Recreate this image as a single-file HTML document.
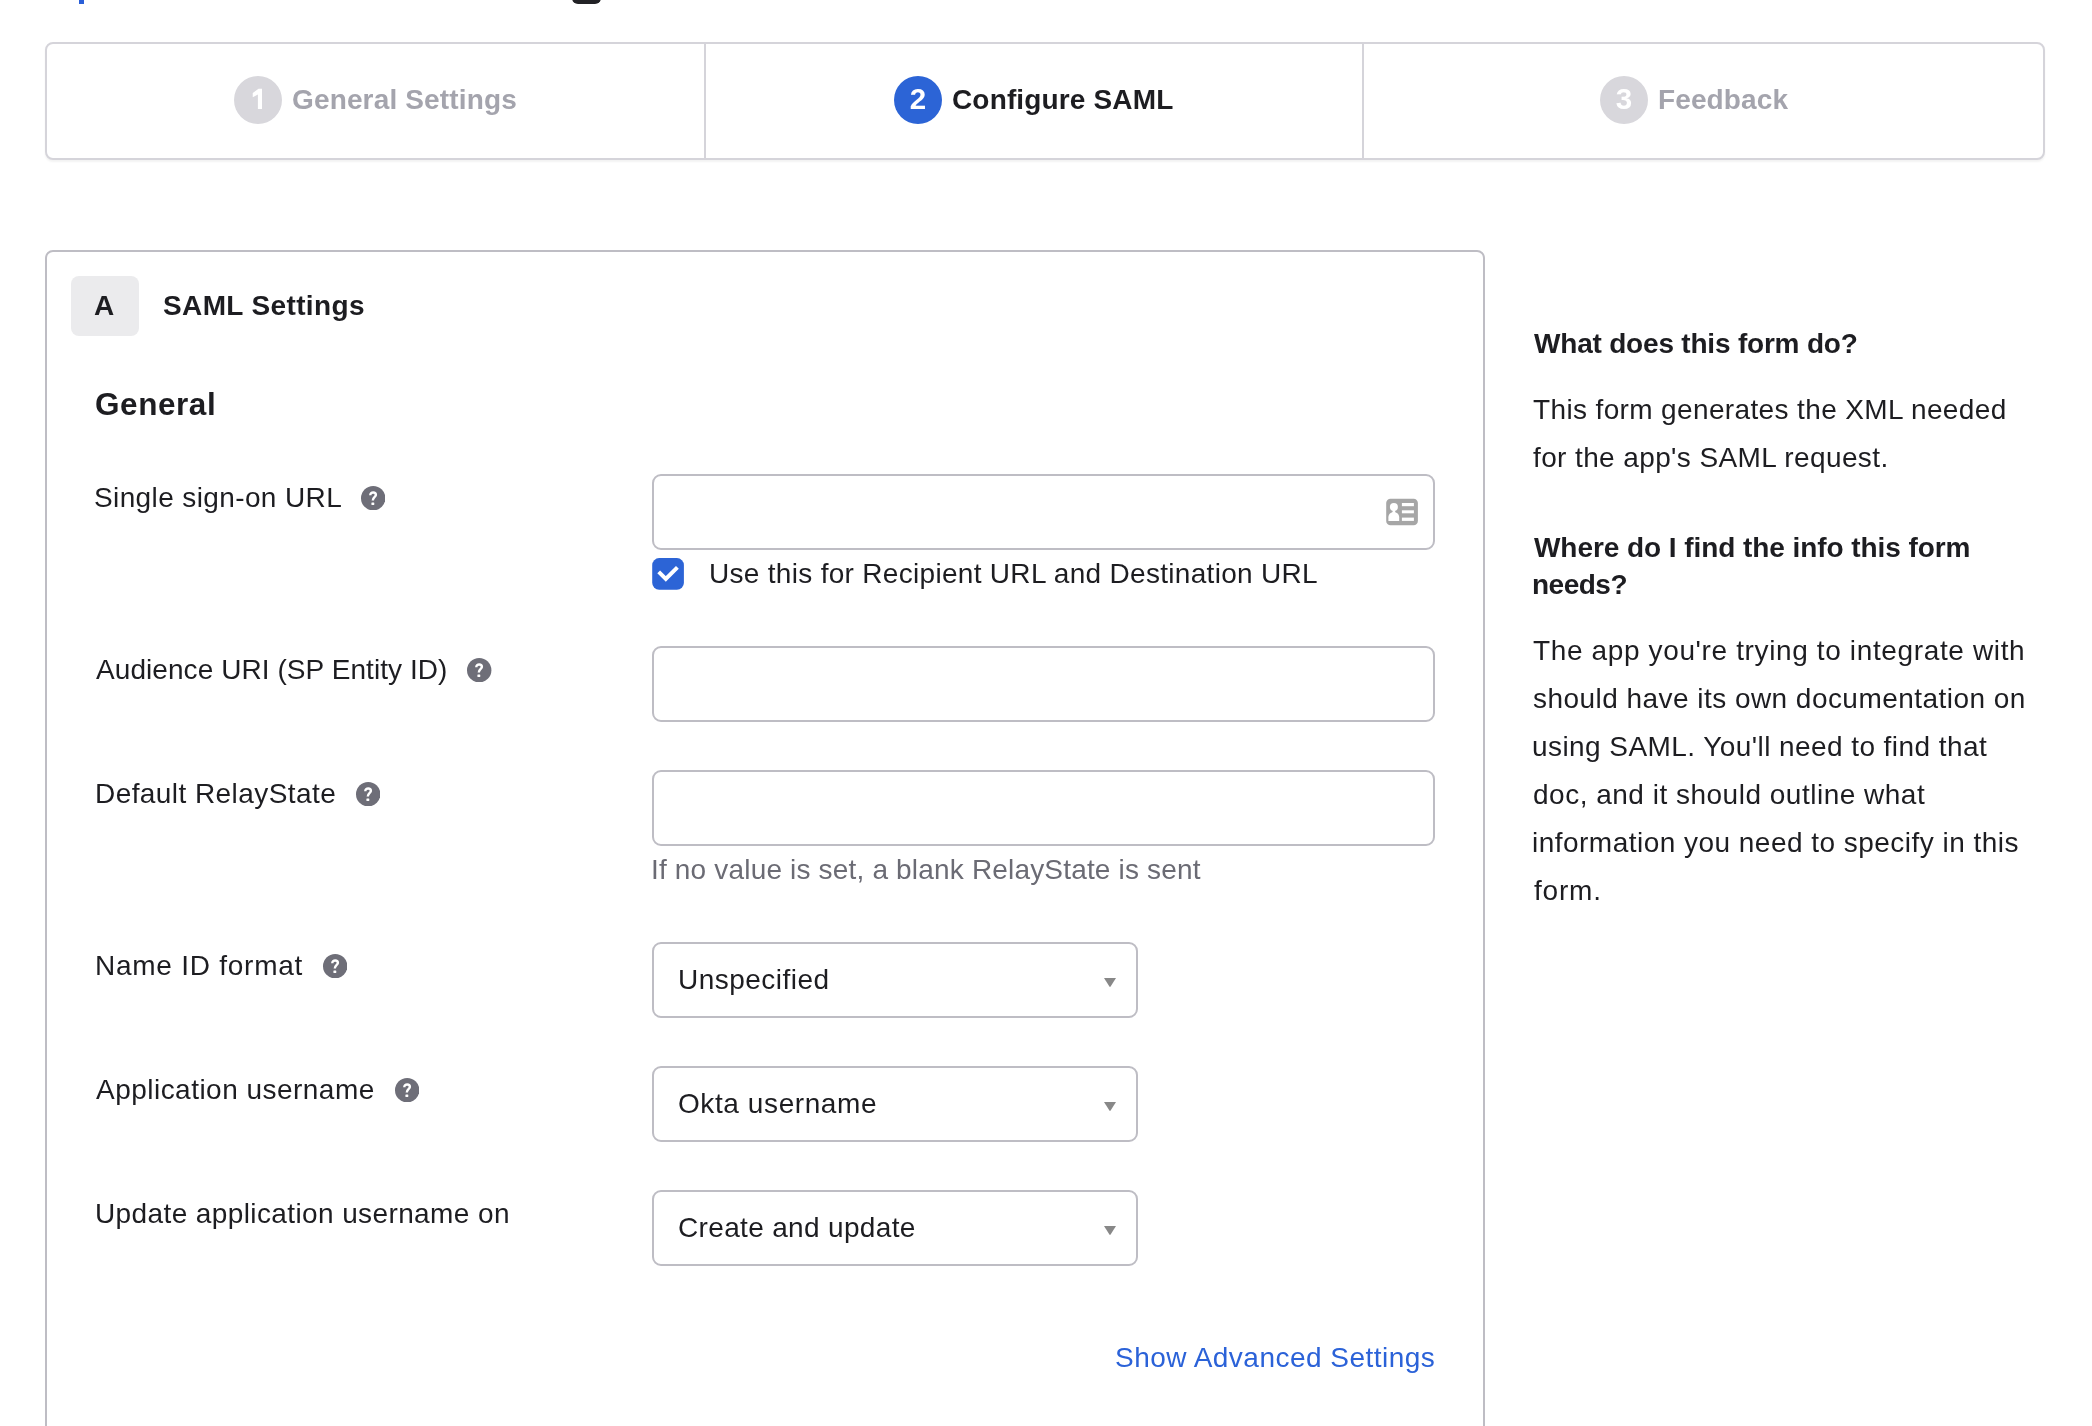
<!DOCTYPE html>
<html>
<head>
<meta charset="utf-8">
<style>
html,body{margin:0;padding:0;}
body{width:2092px;height:1426px;overflow:hidden;background:#ffffff;position:relative;font-family:"Liberation Sans",sans-serif;color:#1d1d21;}
.a{position:absolute;}
.t{position:absolute;white-space:nowrap;line-height:40px;will-change:transform;}
.circ{position:absolute;width:48px;height:48px;border-radius:50%;color:#fff;font-weight:700;font-size:29.5px;line-height:45px;text-align:center;will-change:transform;}
</style>
</head>
<body>
<div class="a" style="left:78.5px;top:0;width:5.5px;height:4px;background:#2a5fd8;"></div>
<div class="a" style="left:572px;top:-20px;width:29px;height:23.8px;border-radius:6px;background:#222226;"></div>
<div class="a" style="left:45px;top:42px;width:1996px;height:114px;border:2px solid #d5d4da;border-radius:8px;background:#fff;box-shadow:0 2px 2px rgba(0,0,0,0.05);"></div>
<div class="a" style="left:704px;top:44px;width:2px;height:114px;background:#d5d4da;"></div>
<div class="a" style="left:1362px;top:44px;width:2px;height:114px;background:#d5d4da;"></div>
<div class="circ" style="left:234px;top:76px;background:#d8d7dc;"></div>
<div class="circ" style="left:894px;top:76px;background:#2c64d6;">2</div>
<div class="circ" style="left:1600px;top:76px;background:#d8d7dc;">3</div>
<svg class="a" style="left:234px;top:76px" width="48" height="48" viewBox="0 0 48 48"><path d="M18.75 17.1L24.5 12.8H28V32.9H23.9V18.6L18.75 21.2Z" fill="#fff"/></svg>
<div class="a" style="left:45px;top:250px;width:1436px;height:1300px;border:2px solid #bebdc4;border-radius:8px;background:#fff;"></div>
<div class="a" style="left:71px;top:276px;width:68px;height:60px;border-radius:8px;background:#ebebed;"></div>
<div class="a" style="left:652px;top:474px;width:779px;height:72px;border:2px solid #bebdc4;border-radius:9px;background:#fff;"></div>
<div class="a" style="left:652px;top:646px;width:779px;height:72px;border:2px solid #bebdc4;border-radius:9px;background:#fff;"></div>
<div class="a" style="left:652px;top:770px;width:779px;height:72px;border:2px solid #bebdc4;border-radius:9px;background:#fff;"></div>
<div class="a" style="left:652px;top:942px;width:482px;height:72px;border:2px solid #bebdc4;border-radius:9px;background:#fff;"></div>
<svg class="a" style="left:1104px;top:978px" width="12" height="10" viewBox="0 0 12 10"><path d="M0 0H12L6.6 8.6Q6 9.2 5.4 8.6Z" fill="#888888"/></svg>
<div class="a" style="left:652px;top:1066px;width:482px;height:72px;border:2px solid #bebdc4;border-radius:9px;background:#fff;"></div>
<svg class="a" style="left:1104px;top:1102px" width="12" height="10" viewBox="0 0 12 10"><path d="M0 0H12L6.6 8.6Q6 9.2 5.4 8.6Z" fill="#888888"/></svg>
<div class="a" style="left:652px;top:1190px;width:482px;height:72px;border:2px solid #bebdc4;border-radius:9px;background:#fff;"></div>
<svg class="a" style="left:1104px;top:1226px" width="12" height="10" viewBox="0 0 12 10"><path d="M0 0H12L6.6 8.6Q6 9.2 5.4 8.6Z" fill="#888888"/></svg>
<svg class="a" style="left:1382px;top:494px" width="40" height="36" viewBox="0 0 40 36"><rect x="4.2" y="4.7" width="31.7" height="26.5" rx="4.3" fill="#a6a6a6"/><circle cx="11.9" cy="12.9" r="4.0" fill="#fff"/><rect x="10.6" y="15.5" width="2.6" height="3.2" fill="#fff"/><path d="M6.4 26.9V23.3C6.4 20.2 8.8 17.9 11.8 17.9C14.8 17.9 17.2 20.2 17.2 23.3V26.9Z" fill="#fff"/><rect x="19.9" y="9.0" width="12.0" height="3.2" fill="#fff"/><rect x="19.9" y="16.3" width="12.0" height="3.0" fill="#fff"/><rect x="19.9" y="23.6" width="12.0" height="3.3" fill="#fff"/></svg>
<svg class="a" style="left:652px;top:558px" width="32" height="32" viewBox="0 0 32 32"><rect x="0.2" y="0.1" width="31.7" height="31.7" rx="7" fill="#2c64d6"/><path d="M6.7 13.9L13.8 20.9L25.4 9.3" fill="none" stroke="#fff" stroke-width="4"/></svg>
<svg class="a" style="left:360.7px;top:485.7px" width="24.4" height="24.4" viewBox="0 0 24.4 24.4"><circle cx="12.2" cy="12.2" r="12.2" fill="#6e6e78"/><path d="M9.3 9.3C9.3 7.4 10.6 6.5 12.2 6.5C13.8 6.5 14.9 7.5 14.9 8.9C14.9 10.7 11.8 11.1 11.8 14.4" fill="none" stroke="#fff" stroke-width="2.4"/><rect x="10.4" y="16.5" width="2.9" height="2.5" rx="0.4" fill="#fff"/></svg>
<svg class="a" style="left:467.4px;top:657.8px" width="24.4" height="24.4" viewBox="0 0 24.4 24.4"><circle cx="12.2" cy="12.2" r="12.2" fill="#6e6e78"/><path d="M9.3 9.3C9.3 7.4 10.6 6.5 12.2 6.5C13.8 6.5 14.9 7.5 14.9 8.9C14.9 10.7 11.8 11.1 11.8 14.4" fill="none" stroke="#fff" stroke-width="2.4"/><rect x="10.4" y="16.5" width="2.9" height="2.5" rx="0.4" fill="#fff"/></svg>
<svg class="a" style="left:356.1px;top:781.7px" width="24.4" height="24.4" viewBox="0 0 24.4 24.4"><circle cx="12.2" cy="12.2" r="12.2" fill="#6e6e78"/><path d="M9.3 9.3C9.3 7.4 10.6 6.5 12.2 6.5C13.8 6.5 14.9 7.5 14.9 8.9C14.9 10.7 11.8 11.1 11.8 14.4" fill="none" stroke="#fff" stroke-width="2.4"/><rect x="10.4" y="16.5" width="2.9" height="2.5" rx="0.4" fill="#fff"/></svg>
<svg class="a" style="left:322.8px;top:953.8px" width="24.4" height="24.4" viewBox="0 0 24.4 24.4"><circle cx="12.2" cy="12.2" r="12.2" fill="#6e6e78"/><path d="M9.3 9.3C9.3 7.4 10.6 6.5 12.2 6.5C13.8 6.5 14.9 7.5 14.9 8.9C14.9 10.7 11.8 11.1 11.8 14.4" fill="none" stroke="#fff" stroke-width="2.4"/><rect x="10.4" y="16.5" width="2.9" height="2.5" rx="0.4" fill="#fff"/></svg>
<svg class="a" style="left:394.9px;top:1077.8px" width="24.4" height="24.4" viewBox="0 0 24.4 24.4"><circle cx="12.2" cy="12.2" r="12.2" fill="#6e6e78"/><path d="M9.3 9.3C9.3 7.4 10.6 6.5 12.2 6.5C13.8 6.5 14.9 7.5 14.9 8.9C14.9 10.7 11.8 11.1 11.8 14.4" fill="none" stroke="#fff" stroke-width="2.4"/><rect x="10.4" y="16.5" width="2.9" height="2.5" rx="0.4" fill="#fff"/></svg>
<div class="t" style="left:292.4px;top:79.8px;font-size:28px;font-weight:700;color:#a4a4ad;letter-spacing:0.147px">General Settings</div>
<div class="t" style="left:952.4px;top:79.8px;font-size:28px;font-weight:700;color:#1d1d21;letter-spacing:0.154px">Configure SAML</div>
<div class="t" style="left:1658.0px;top:79.7px;font-size:28px;font-weight:700;color:#a4a4ad;letter-spacing:0.114px">Feedback</div>
<div class="t" style="left:94.2px;top:286.4px;font-size:28px;font-weight:700;color:#1d1d21;letter-spacing:0.0px">A</div>
<div class="t" style="left:163.0px;top:286.4px;font-size:28px;font-weight:700;color:#1d1d21;letter-spacing:0.375px">SAML Settings</div>
<div class="t" style="left:95.0px;top:383.5px;font-size:31.5px;font-weight:700;color:#1d1d21;letter-spacing:0.567px">General</div>
<div class="t" style="left:93.9px;top:477.9px;font-size:28px;font-weight:400;color:#1d1d21;letter-spacing:0.382px">Single sign-on URL</div>
<div class="t" style="left:708.5px;top:553.6px;font-size:28px;font-weight:400;color:#1d1d21;letter-spacing:0.302px">Use this for Recipient URL and Destination URL</div>
<div class="t" style="left:95.6px;top:650.1px;font-size:28px;font-weight:400;color:#1d1d21;letter-spacing:0.069px">Audience URI (SP Entity ID)</div>
<div class="t" style="left:94.7px;top:774.0px;font-size:28px;font-weight:400;color:#1d1d21;letter-spacing:0.429px">Default RelayState</div>
<div class="t" style="left:651.2px;top:849.8px;font-size:28px;font-weight:400;color:#6b6b74;letter-spacing:0.176px">If no value is set, a blank RelayState is sent</div>
<div class="t" style="left:94.7px;top:945.6px;font-size:28px;font-weight:400;color:#1d1d21;letter-spacing:0.746px">Name ID format</div>
<div class="t" style="left:677.6px;top:960.1px;font-size:28px;font-weight:400;color:#1d1d21;letter-spacing:0.48px">Unspecified</div>
<div class="t" style="left:95.9px;top:1069.9px;font-size:28px;font-weight:400;color:#1d1d21;letter-spacing:0.474px">Application username</div>
<div class="t" style="left:678.2px;top:1084.2px;font-size:28px;font-weight:400;color:#1d1d21;letter-spacing:0.592px">Okta username</div>
<div class="t" style="left:94.6px;top:1194.0px;font-size:28px;font-weight:400;color:#1d1d21;letter-spacing:0.39px">Update application username on</div>
<div class="t" style="left:678.4px;top:1208.0px;font-size:28px;font-weight:400;color:#1d1d21;letter-spacing:0.337px">Create and update</div>
<div class="t" style="left:1115.4px;top:1337.8px;font-size:28px;font-weight:400;color:#2b62d8;letter-spacing:0.476px">Show Advanced Settings</div>
<div class="t" style="left:1533.5px;top:324.1px;font-size:28px;font-weight:700;color:#1d1d21;letter-spacing:-0.2px">What does this form do?</div>
<div class="t" style="left:1532.5px;top:390.0px;font-size:28px;font-weight:400;color:#1d1d21;letter-spacing:0.364px">This form generates the XML needed</div>
<div class="t" style="left:1533.2px;top:437.8px;font-size:28px;font-weight:400;color:#1d1d21;letter-spacing:0.385px">for the app&#x27;s SAML request.</div>
<div class="t" style="left:1533.5px;top:528.2px;font-size:28px;font-weight:700;color:#1d1d21;letter-spacing:-0.067px">Where do I find the info this form</div>
<div class="t" style="left:1531.5px;top:564.6px;font-size:28px;font-weight:700;color:#1d1d21;letter-spacing:-0.5px">needs?</div>
<div class="t" style="left:1532.5px;top:630.8px;font-size:28px;font-weight:400;color:#1d1d21;letter-spacing:0.632px">The app you&#x27;re trying to integrate with</div>
<div class="t" style="left:1533.0px;top:678.6px;font-size:28px;font-weight:400;color:#1d1d21;letter-spacing:0.457px">should have its own documentation on</div>
<div class="t" style="left:1532.0px;top:726.8px;font-size:28px;font-weight:400;color:#1d1d21;letter-spacing:0.429px">using SAML. You&#x27;ll need to find that</div>
<div class="t" style="left:1533.0px;top:774.9px;font-size:28px;font-weight:400;color:#1d1d21;letter-spacing:0.5px">doc, and it should outline what</div>
<div class="t" style="left:1532.0px;top:822.8px;font-size:28px;font-weight:400;color:#1d1d21;letter-spacing:0.474px">information you need to specify in this</div>
<div class="t" style="left:1534.0px;top:870.5px;font-size:28px;font-weight:400;color:#1d1d21;letter-spacing:0.8px">form.</div>
</body>
</html>
